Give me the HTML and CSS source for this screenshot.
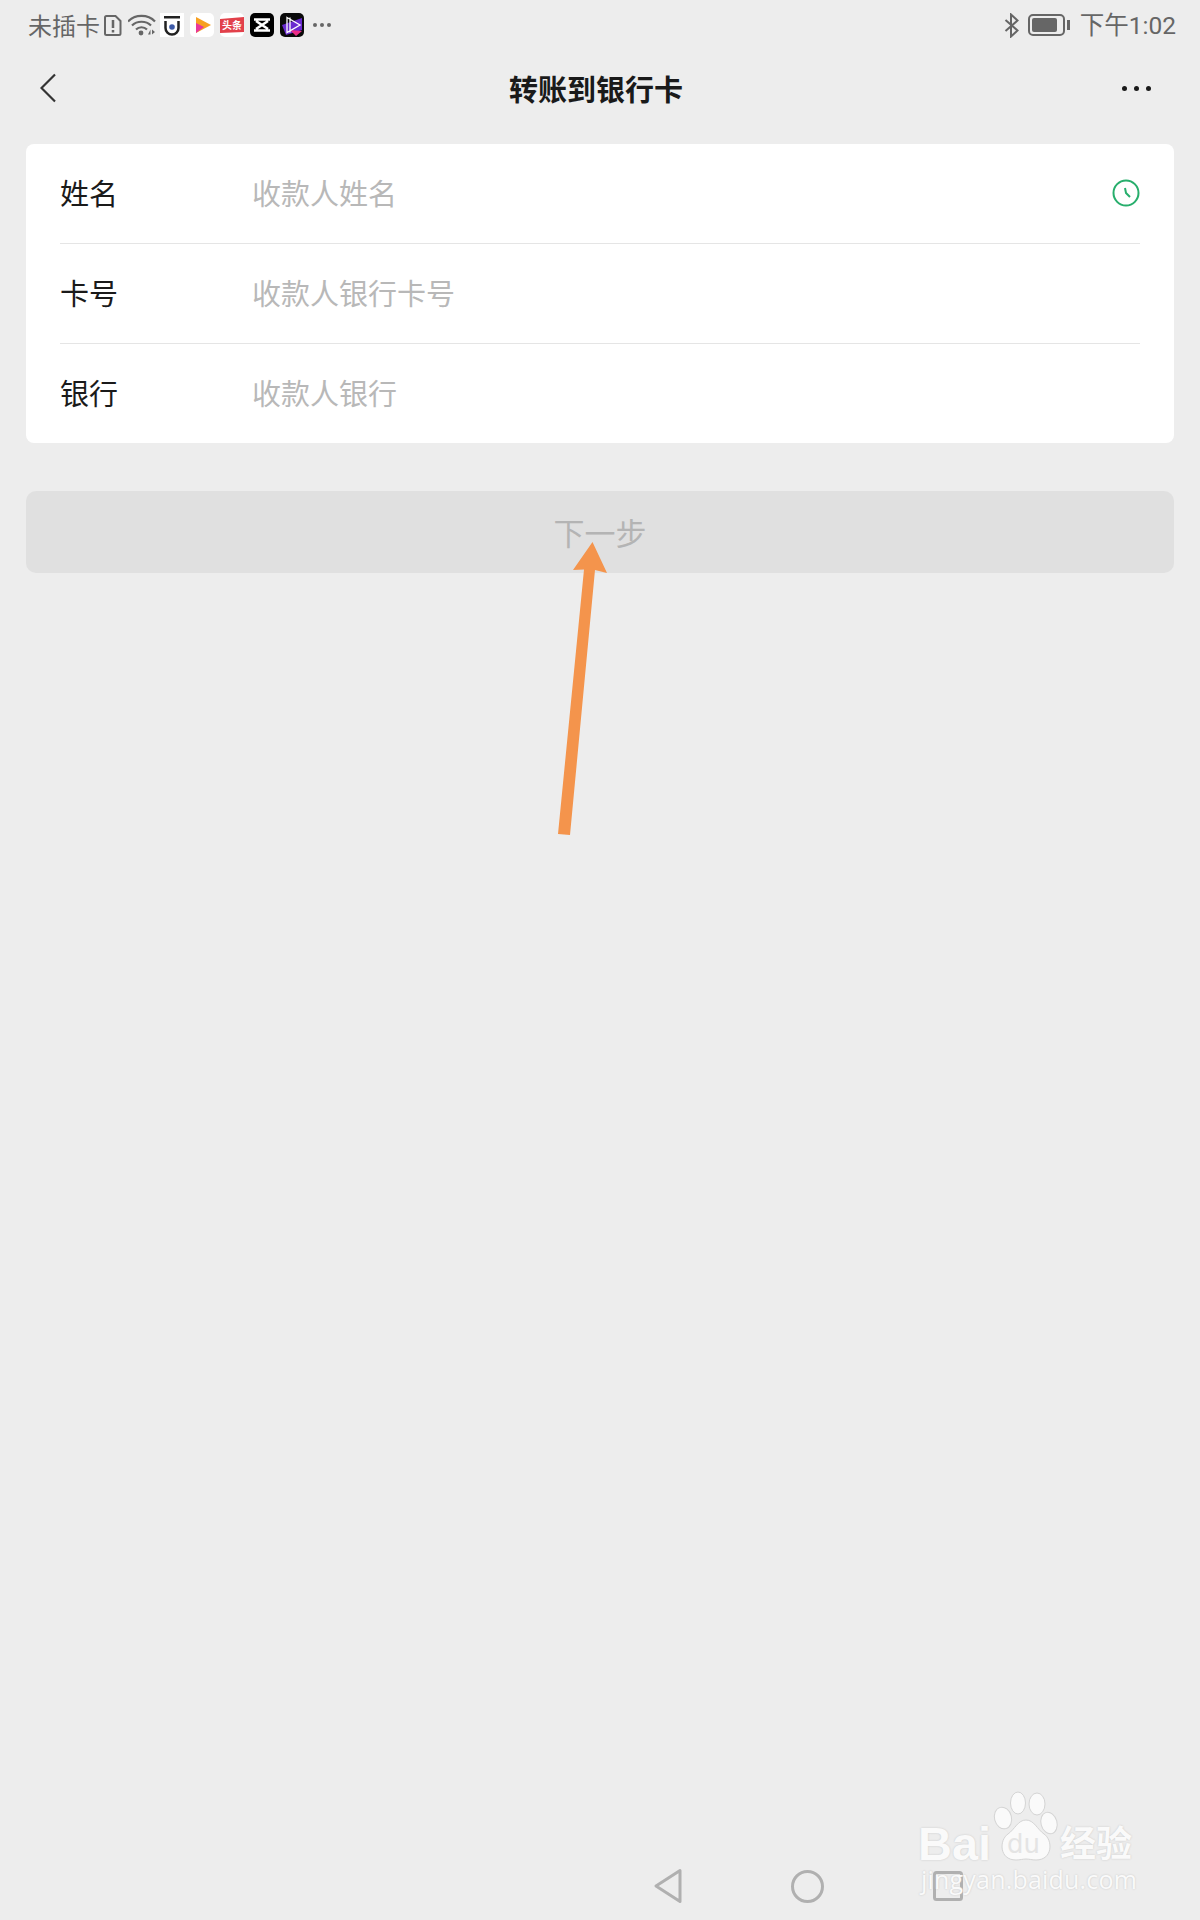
FILE: index.html
```html
<!DOCTYPE html>
<html>
	<head>
		<meta charset="utf-8" />
		<title>转账到银行卡</title>
		<link rel="stylesheet" href="styles.css">
	</head>
	<body>
		<div id="page">
			<!--状态栏-->
			<div class="status">
				<span class="status-text">未插卡</span>
				<svg class="ic-sim" width="18" height="21" viewBox="0 0 18 21"><path d="M2.500 1h9L16.500 6v12.500a1.500 1.500 0 0 1-1.500 1.500H2.500A1.500 1.500 0 0 1 1 18.500V2.500A1.500 1.500 0 0 1 2.500 1z" fill="none" stroke="#666" stroke-width="2"/><path d="M9 5v8M9 15v2.500" stroke="#666" stroke-width="2.500"/></svg>
				<svg class="ic-wifi" width="28" height="22" viewBox="0 0 28 22"><g fill="none" stroke="#666" stroke-width="2.200"><path d="M0 7.500C7 0 20 0 27 7.500"/><path d="M4 11.500c5-5 14-5 19 0"/><path d="M8 15.500c3-3 8-3 11 0"/></g><circle cx="13" cy="19" r="2.400" fill="#666"/><path d="M20 20.500l2.500-5v5zM24 15.500v5l3-2.500z" fill="#666"/></svg>
				<div class="apps">
					<svg width="24" height="24" viewBox="0 0 24 24"><rect width="24" height="24" fill="#fff"/><rect x="4" y="3" width="16" height="2.500" fill="#222"/><path d="M5.500 8v7a6.500 6.500 0 0 0 13 0V8" fill="none" stroke="#222" stroke-width="2.500"/><circle cx="12" cy="14" r="2.800" fill="#3d5aa8"/></svg>
					<svg width="24" height="24" viewBox="0 0 24 24"><rect width="24" height="24" rx="5" fill="#fff"/><path d="M6 4l15 8-15 8z" fill="#f7a021"/><path d="M6 10l8 4-8 6z" fill="#e8369b"/></svg>
					<svg width="24" height="24" viewBox="0 0 24 24"><rect width="24" height="24" rx="5" fill="#fff"/><path d="M0 6l24-2v15L0 20z" fill="#e2404a"/><text x="12" y="16" class="tt-text">头条</text></svg>
					<svg width="24" height="24" viewBox="0 0 24 24"><rect width="24" height="24" rx="5" fill="#000"/><path d="M4 6.500h16M4 17.500h16M6 8l12 8M18 8L6 16" fill="none" stroke="#fff" stroke-width="2.600"/></svg>
					<svg width="24" height="24" viewBox="0 0 24 24"><rect width="24" height="24" rx="5" fill="#0a0a0a"/><path d="M2 12L22 5v12L6 22z" fill="#6a2bd0"/><path d="M10 17l12 1-6 5z" fill="#ee2c86"/><path d="M7 4.500L20 12 7 19.500zM10 4.500v15" fill="none" stroke="#fff" stroke-width="1.300"/></svg>
				</div>
				<div class="more-dots"><i></i><i></i><i></i></div>
				<svg class="ic-bt" width="16" height="25" viewBox="0 0 16 25"><path d="M1.500 7l12 10.500L7 23.500V1.500l6.500 6L1.500 18" fill="none" stroke="#666" stroke-width="2"/></svg>
				<svg class="ic-batt" width="43" height="22" viewBox="0 0 43 22"><rect x="1" y="1" width="35" height="20" rx="4" fill="none" stroke="#666" stroke-width="2"/><rect x="4" y="4" width="25" height="14" rx="2" fill="#666"/><rect x="39" y="6" width="3" height="10" fill="#666"/></svg>
				<span class="status-text time">下午1:02</span>
			</div>
			<!--标题栏-->
			<div class="nav-title">
				<svg class="back" width="16" height="30" viewBox="0 0 16 30"><path d="M15 1.500L1.500 15 15 28.500" fill="none" stroke="#333" stroke-width="2.200"/></svg>
				<h1>转账到银行卡</h1>
				<div class="title-more"><i></i><i></i><i></i></div>
			</div>
			<!--表单-->
			<div id="content">
				<div class="card">
					<div class="row">
						<span class="label">姓名</span>
						<span class="holder">收款人姓名</span>
						<svg class="clock" width="28" height="28" viewBox="0 0 28 28"><circle cx="14" cy="14" r="12.500" fill="none" stroke="#27ae6c" stroke-width="2"/><path d="M13 9l1 5 4 4" fill="none" stroke="#27ae6c" stroke-width="2"/></svg>
					</div>
					<div class="row">
						<span class="label">卡号</span>
						<span class="holder">收款人银行卡号</span>
					</div>
					<div class="row">
						<span class="label">银行</span>
						<span class="holder">收款人银行</span>
					</div>
				</div>
				<div class="next-btn">下一步</div>
			</div>
			<!--底部导航-->
			<div class="bottom">
				<svg width="28" height="36" viewBox="0 0 28 36"><path d="M26 2.500v31L2 18z" fill="none" stroke="#b0b0b0" stroke-width="3" stroke-linejoin="round"/></svg>
				<svg width="33" height="33" viewBox="0 0 33 33"><circle cx="16.500" cy="16.500" r="15" fill="none" stroke="#b0b0b0" stroke-width="3"/></svg>
				<svg width="30" height="30" viewBox="0 0 30 30"><rect x="1.500" y="1.500" width="27" height="27" rx="2" fill="none" stroke="#b0b0b0" stroke-width="3"/></svg>
			</div>

			<!--橙色箭头-->
			<svg class="arrow" width="60" height="300" viewBox="0 0 60 300"><path d="M42.500 2L23 30l11-.500L8 294l12 1L45 30l12 3z" fill="#f4944c"/></svg>
			<!--水印-->
			<div class="mark">
				<svg class="paw" width="68" height="72" viewBox="0 0 68 72"><g fill="#fafafa" stroke="#d4d4d4"><ellipse cx="11" cy="28" rx="8.500" ry="11" transform="rotate(-15 11 28)"/><ellipse cx="26" cy="13" rx="7.500" ry="11"/><ellipse cx="45" cy="14" rx="8" ry="11"/><ellipse cx="57" cy="33" rx="8" ry="11" transform="rotate(-15 57 33)"/><path d="M34 30c8 0 11 9 18 14 9 6 9 26-8 26-4 0-7-1-10-1s-6 1-10 1C7 70 7 50 16 44c7-5 10-14 18-14z"/></g></svg>
				<div class="mark-top"><span class="bai">Bai</span><span class="du">du</span><span class="jy">经验</span></div>
				<div class="mark-url">jingyan.baidu.com</div>
			</div>
		</div>
	</body>
</html>
```

FILE: styles.css
```css
*{margin: 0;padding: 0;box-sizing: border-box;}
body{background: #ededed;font-family: "Noto Sans CJK SC", "Noto Sans", sans-serif;}
i{display: block;}
#page{position: relative;width: 1200px;height: 1920px;display: flex;flex-direction: column;overflow: hidden;}
/*状态栏*/
.status{height: 50px;display: flex;align-items: center;padding: 0 24px 0 28px;}
.status-text{font-size: 24px;line-height: 50px;color: #666;}
.time{font-family: Roboto, "Noto Sans CJK SC", sans-serif;font-size: 24.500px;margin-left: 9px;padding-top: 1px;}
.ic-sim{margin-left: 4px;}
.ic-wifi{margin-left: 6px;}
.apps{display: flex;gap: 6px;margin-left: 4px;}
.tt-text{font-size: 10px;font-weight: 700;fill: #fff;text-anchor: middle;}
.more-dots{display: flex;gap: 3px;margin-left: 9px;margin-right: auto;}
.more-dots i{width: 4px;height: 4px;border-radius: 50%;background: #666;}
.ic-bt{margin-right: 8px;}
/*标题栏*/
.nav-title{height: 94px;display: flex;align-items: center;justify-content: space-between;padding: 0 49px 18px 40px;}
.nav-title h1{font-size: 29px;font-weight: 700;color: #1a1a1a;line-height: 40px;margin-left: 14px;}
.title-more{display: flex;gap: 7px;}
.title-more i{width: 5px;height: 5px;border-radius: 50%;background: #1a1a1a;}
/*表单*/
#content{flex: 1;padding: 0 26px;}
.card{background: #fff;border-radius: 8px;padding: 0 34px;}
.row{height: 100px;display: flex;align-items: center;padding-bottom: 4px;border-bottom: 1px solid #e5e5e5;font-size: 29px;}
.row:last-child{height: 99px;border-bottom: none;}
.label{width: 192px;color: #1a1a1a;}
.holder{color: #b8b8b8;}
.clock{margin-left: auto;margin-top: 2px;}
.next-btn{margin-top: 48px;height: 82px;line-height: 82px;background: #e0e0e0;border-radius: 10px;text-align: center;font-size: 31px;color: #b4b4b4;}
/*底部导航*/
.bottom{height: 68px;display: flex;align-items: center;gap: 109px;padding-left: 654px;}
/*箭头和水印*/
.arrow{position: absolute;left: 550px;top: 540px;}
.mark{position: absolute;left: 920px;top: 1790px;width: 220px;height: 106px;color: #fafafa;text-shadow: 0 0 2px #c4c4c4;}
.paw{position: absolute;left: 72px;top: 0;}
.mark-top{position: absolute;left: 0;top: 24px;height: 50px;width: 220px;}
.bai{position: absolute;left: -2px;top: 10px;font-family: "Liberation Sans", sans-serif;font-weight: 700;font-size: 47px;line-height: 40px;}
.du{position: absolute;left: 87px;top: 15px;font-family: "DejaVu Sans", sans-serif;font-size: 26px;line-height: 30px;color: #e4e4e4;text-shadow: none;}
.jy{position: absolute;left: 140px;top: 5px;font-weight: 700;font-size: 36px;line-height: 44px;}
.mark-url{position: absolute;left: 1px;top: 74px;font-family: "Open Sans", sans-serif;font-size: 25px;line-height: 30px;letter-spacing: .2px;}
```
